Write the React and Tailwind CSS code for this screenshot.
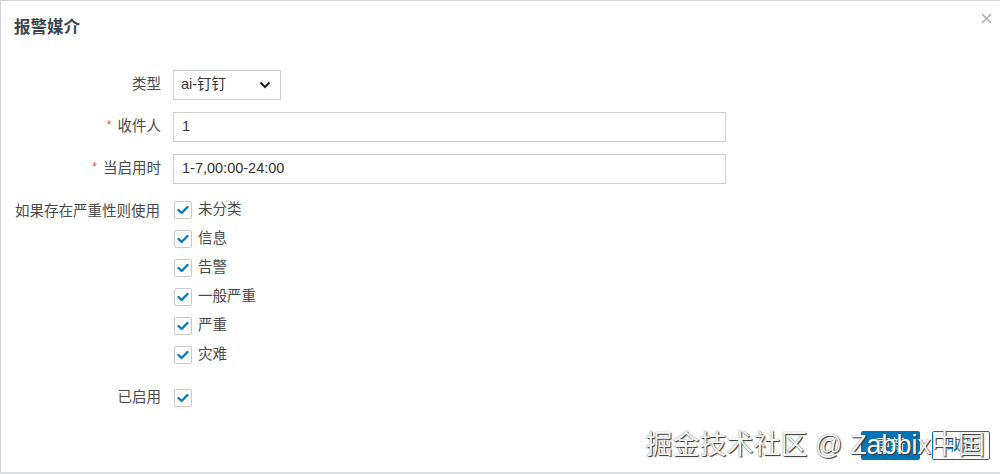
import React from 'react';

const font = "font-['Liberation_Sans','Noto_Sans_CJK_SC',sans-serif]";

function Check() {
  return (
    <span className="w-[18px] h-[18px] border border-[#c9c9c9] rounded-[2px] bg-white flex items-center justify-center shrink-0">
      <svg width="12" height="10" viewBox="0 0 12 10">
        <polyline points="1.5,5 4.6,8 10.5,2" fill="none" stroke="#0a79bb" strokeWidth="2.4" strokeLinecap="round" strokeLinejoin="round" />
      </svg>
    </span>
  );
}

function Label({ children, required }) {
  return (
    <div className="w-[146px] shrink-0 text-right text-[#4a4a4a]">
      {required && <span className="text-[#e0533d] mr-[6px] text-[12px] align-top">*</span>}
      {children}
    </div>
  );
}

const severities = ['未分类', '信息', '告警', '一般严重', '严重', '灾难'];

export default function App() {
  return (
    <div className={`w-[1000px] h-[474px] bg-[#d9dde0] ${font} text-[14.5px] relative overflow-hidden`}>
      <div className="h-[472px] bg-white border-t border-l border-[#d2d2d2] relative">
        <div className="flex items-center justify-between pl-[13px] pr-[8px] pt-[15px]">
          <h2 className="text-[16.5px] font-bold text-[#3e4650] leading-[22px]">报警媒介</h2>
          <svg width="11" height="11" viewBox="0 0 11 11" className="-mt-[17px]">
            <path d="M1 1L10 10M10 1L1 10" stroke="#b0b0b0" strokeWidth="1.6" />
          </svg>
        </div>

        <div className="pl-[14px] mt-[32px] flex flex-col">
          <div className="flex items-center gap-[12px] h-[30px]">
            <Label>类型</Label>
            <div className="w-[108px] h-[30px] border border-[#cfcfcf] flex items-center justify-between pl-[7px] pr-[9px] text-[#333]">
              <span>ai-钉钉</span>
              <svg width="12" height="8" viewBox="0 0 12 8">
                <polyline points="1.5,1.5 6,6 10.5,1.5" fill="none" stroke="#222" strokeWidth="2" />
              </svg>
            </div>
          </div>

          <div className="flex items-center gap-[12px] h-[30px] mt-[12px]">
            <Label required>收件人</Label>
            <div className="w-[553px] h-[30px] border border-[#cfcfcf] flex items-center pl-[8px] text-[#333]">1</div>
          </div>

          <div className="flex items-center gap-[12px] h-[30px] mt-[12px]">
            <Label required>当启用时</Label>
            <div className="w-[553px] h-[30px] border border-[#cfcfcf] flex items-center pl-[8px] text-[#333]">1-7,00:00-24:00</div>
          </div>

          <div className="flex gap-[12px] mt-[17px]">
            <div className="w-[146px] shrink-0 text-[#4a4a4a] leading-[20px]">如果存在严重性则使用</div>
            <div className="flex flex-col gap-[11px] pl-[1px]">
              {severities.map((s) => (
                <div key={s} className="flex items-center gap-[6px] h-[18px] text-[#4a4a4a]">
                  <Check />
                  <span>{s}</span>
                </div>
              ))}
            </div>
          </div>

          <div className="flex items-center gap-[12px] h-[18px] mt-[25px]">
            <Label>已启用</Label>
            <div className="pl-[1px]"><Check /></div>
          </div>
        </div>

        <div className="absolute right-[10px] bottom-[12px] flex gap-[12px]">
          <button className="w-[59px] h-[29px] bg-[#0275b8] text-white rounded-[2px]">更新</button>
          <button className="w-[58px] h-[29px] bg-white border border-[#0275b8] text-[#0275b8] rounded-[2px]">取消</button>
        </div>

        <div className="absolute right-[15px] bottom-[12px] text-[27px] leading-[30px] text-[#f5f5f5] [text-shadow:1px_1px_1px_#333,0_0_1px_#666] whitespace-nowrap">
          掘金技术社区 @ Zabbix中国
        </div>
      </div>
    </div>
  );
}
